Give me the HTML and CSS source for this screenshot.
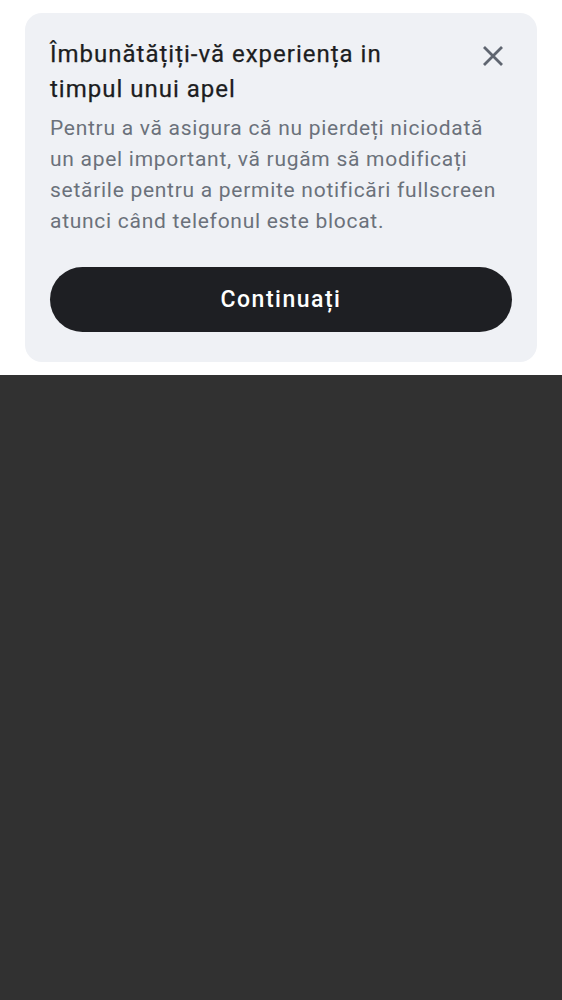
FILE: index.html
```html
<!DOCTYPE html>
<html lang="ro">
<head>
<meta charset="utf-8">
<link rel="stylesheet" href="styles.css">
</head>
<body>
<div class="top">
  <div class="card">
    <div class="head">
      <h1 class="title">Îmbunătățiți-vă experiența in timpul unui apel</h1>
      <button class="close" aria-label="Închide">
        <svg width="22" height="22" viewBox="0 0 22 22"><path d="M2 2 L20 20 M20 2 L2 20" stroke="#5f6570" stroke-width="2.8" stroke-linecap="butt"/></svg>
      </button>
    </div>
    <p class="body">Pentru a vă asigura că nu pierdeți niciodată un apel important, vă rugăm să modificați setările pentru a permite notificări fullscreen atunci când telefonul este blocat.</p>
    <button class="cta">Continuați</button>
  </div>
</div>
<div class="dark"></div>
</body>
</html>
```
FILE: styles.css
```css
html, body { margin: 0; padding: 0; }
body { background: #313131; font-family: Roboto, "Noto Sans", sans-serif; }
.top { background: #ffffff; padding: 13px 25px 13px 25px; }
.card { background: #eff1f5; border-radius: 17px; padding: 24px 25px 30px 25px; }
.head { display: flex; align-items: flex-start; justify-content: space-between; }
.title { margin: 0; font-size: 24px; line-height: 35px; font-weight: 400; color: #1c1d21; letter-spacing: 1px; width: 370px; -webkit-text-stroke: 0.25px #1c1d21; }
.close { background: none; border: 0; padding: 0; margin: 8px 8px 0 0; width: 22px; height: 22px; display: flex; }
.body { margin: 6px 0 0 0; font-size: 21px; line-height: 31px; color: #6b717b; letter-spacing: 0.72px; }
.cta { display: block; width: 100%; height: 65px; margin-top: 30px; border: 0; border-radius: 33px; background: #1e1f23; color: #ffffff; font-family: Roboto, sans-serif; font-size: 23px; font-weight: 500; letter-spacing: 1.5px; }
.dark { height: 625px; background: #313131; }
```
